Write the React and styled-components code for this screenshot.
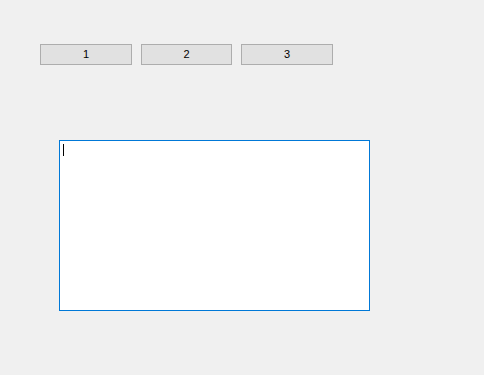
import React from 'react';
import styled, { createGlobalStyle } from 'styled-components';

const GlobalStyle = createGlobalStyle`
  html, body {
    margin: 0;
    padding: 0;
    background: #f0f0f0;
    font-family: 'Liberation Sans', Arial, sans-serif;
  }
`;

const Window = styled.div`
  width: 484px;
  height: 375px;
  box-sizing: border-box;
  padding: 44px 0 0 40px;
  display: flex;
  flex-direction: column;
`;

const Toolbar = styled.div`
  display: flex;
  gap: 9px;
`;

const Button = styled.button`
  width: ${(p) => p.$w}px;
  height: 21px;
  box-sizing: border-box;
  margin: 0;
  padding: 0;
  background: #e1e1e1;
  border: 1px solid #adadad;
  border-radius: 0;
  font-family: 'Liberation Sans', Arial, sans-serif;
  font-size: 11px;
  color: #000;
  line-height: 19px;
`;

const EditorWrap = styled.div`
  position: relative;
  margin: 75px 0 0 19px;
  width: 311px;
  height: 171px;
`;

const Editor = styled.textarea`
  display: block;
  width: 100%;
  height: 100%;
  box-sizing: border-box;
  margin: 0;
  border: 1px solid #0078d7;
  outline: none;
  resize: none;
  background: #fff;
  padding: 2px 3px;
  font-family: 'Liberation Sans', Arial, sans-serif;
  font-size: 12px;
  caret-color: transparent;
`;

const Caret = styled.span`
  position: absolute;
  left: 4px;
  top: 4px;
  width: 1px;
  height: 12px;
  background: #000;
  pointer-events: none;
`;

const buttons = [
  { label: '1', w: 92 },
  { label: '2', w: 91 },
  { label: '3', w: 92 },
];

export default function App() {
  return (
    <>
      <GlobalStyle />
      <Window>
        <Toolbar>
          {buttons.map((b) => (
            <Button key={b.label} $w={b.w}>{b.label}</Button>
          ))}
        </Toolbar>
        <EditorWrap>
          <Editor />
          <Caret />
        </EditorWrap>
      </Window>
    </>
  );
}
